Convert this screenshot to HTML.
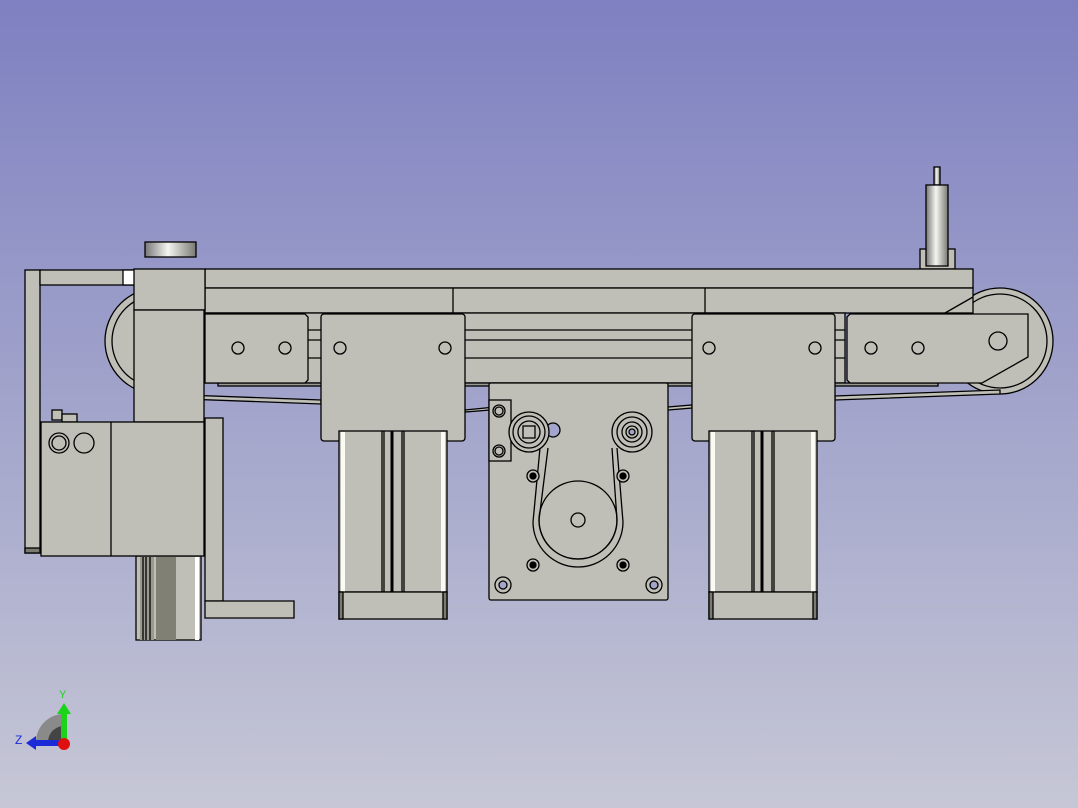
<!DOCTYPE html>
<html><head><style>
html,body{margin:0;padding:0;}
body{width:1078px;height:808px;overflow:hidden;background:linear-gradient(#7e80c1,#a2a4cb 50%,#c6c7d6);}
svg{display:block;}
</style></head><body>
<svg width="1078" height="808" viewBox="0 0 1078 808" xmlns="http://www.w3.org/2000/svg">
<defs>
<linearGradient id="cyl" x1="0" x2="1"><stop offset="0" stop-color="#777"/><stop offset=".45" stop-color="#f4f4f0"/><stop offset="1" stop-color="#7a7a74"/></linearGradient>
</defs>
<g stroke="#000" stroke-width="1.3" fill="#bfbfb7">
<circle cx="1000" cy="341" r="53"/><circle cx="1000" cy="341" r="47"/>
<circle cx="158" cy="341" r="53"/><circle cx="158" cy="341" r="46"/>
<path d="M158 394 L321 400 L321 404 L158 398Z"/>
<path d="M835 400 L1000 394 L1000 390 L835 396Z"/>
<path d="M465 410 L515 405 L515 408 L465 412Z"/>
<path d="M632 410 L692 405 L692 408 L632 413Z"/>
<rect x="934" y="167" width="6" height="18" fill="url(#cyl)"/>
<rect x="920" y="249" width="35" height="20"/>
<rect x="926" y="185" width="22" height="81" fill="url(#cyl)"/>
<rect x="205" y="269" width="768" height="19"/>
<rect x="205" y="288" width="768" height="25"/>
<line x1="453" y1="288" x2="453" y2="313"/><line x1="705" y1="288" x2="705" y2="313"/>
<path d="M945 313 L973 297"/>
<rect x="205" y="313" width="640" height="70"/>
<line x1="205" y1="330" x2="845" y2="330"/><line x1="205" y1="340" x2="845" y2="340"/><line x1="205" y1="358" x2="845" y2="358"/>
<rect x="218" y="383" width="720" height="3" fill="#9a9a94"/>
<path d="M205 314 H305 L308 317 V380 L305 383 H205Z"/>
<circle cx="238" cy="348" r="6"/><circle cx="285" cy="348" r="6"/>
<path d="M850 314 H1028 V357 L982 383 H850 L847 380 V317Z"/>
<circle cx="871" cy="348" r="6"/><circle cx="918" cy="348" r="6"/><circle cx="998" cy="341" r="9"/>
<rect x="489" y="383" width="179" height="217" rx="2"/>
<rect x="489" y="400" width="22" height="61"/>
<circle cx="499" cy="411" r="6"/><circle cx="499" cy="411" r="4"/>
<circle cx="499" cy="451" r="6"/><circle cx="499" cy="451" r="4"/>
<circle cx="553" cy="430" r="7" fill="#a3a5cc"/>
<circle cx="578" cy="520" r="39"/>
<path d="M548 448 L539 520 A39 39 0 0 0 617 520 L612 448" fill="none"/>
<path d="M540 448 L533 522 A45 45 0 0 0 623 522 L617 448" fill="none"/>
<circle cx="578" cy="520" r="7"/>
<circle cx="529" cy="432" r="20"/><circle cx="529" cy="432" r="16"/><circle cx="529" cy="432" r="11"/><rect x="523" y="426" width="12" height="12"/>
<circle cx="632" cy="432" r="20"/><circle cx="632" cy="432" r="15"/><circle cx="632" cy="432" r="10"/><circle cx="632" cy="432" r="6"/><circle cx="632" cy="432" r="3" fill="#a3a5cc"/>
<g><circle cx="533" cy="476" r="6"/><circle cx="533" cy="476" r="3" fill="#000"/>
<circle cx="623" cy="476" r="6"/><circle cx="623" cy="476" r="3" fill="#000"/>
<circle cx="533" cy="565" r="6"/><circle cx="533" cy="565" r="3" fill="#000"/>
<circle cx="623" cy="565" r="6"/><circle cx="623" cy="565" r="3" fill="#000"/></g>
<circle cx="503" cy="585" r="8"/><circle cx="503" cy="585" r="4" fill="#a3a5cc"/>
<circle cx="654" cy="585" r="8"/><circle cx="654" cy="585" r="4" fill="#a3a5cc"/>
<rect x="321" y="314" width="144" height="127" rx="3"/>
<circle cx="340" cy="348" r="6"/><circle cx="445" cy="348" r="6"/>
<rect x="692" y="314" width="143" height="127" rx="3"/>
<circle cx="709" cy="348" r="6"/><circle cx="815" cy="348" r="6"/>
<g id="c1">
<rect x="339" y="431" width="108" height="161"/>
<rect x="341" y="432" width="4" height="160" fill="#fbfbf5" stroke="none"/>
<rect x="441" y="432" width="4" height="160" fill="#fbfbf5" stroke="none"/>
<line x1="382" y1="431" x2="382" y2="592"/><line x1="384" y1="431" x2="384" y2="592"/>
<line x1="392" y1="431" x2="392" y2="592" stroke-width="3"/>
<line x1="402" y1="431" x2="402" y2="592"/><line x1="404" y1="431" x2="404" y2="592"/>
<rect x="339" y="592" width="108" height="27"/>
<rect x="339" y="592" width="4" height="27" fill="#7a7a6e"/><rect x="443" y="592" width="4" height="27" fill="#7a7a6e"/>
</g>
<use href="#c1" x="370"/>
<rect x="145" y="242" width="51" height="15" fill="url(#cyl)"/>
<rect x="25" y="270" width="15" height="283"/>
<rect x="25" y="548" width="15" height="5" fill="#7a7a6e"/>
<rect x="40" y="270" width="125" height="15"/>
<rect x="123" y="270" width="22" height="15" fill="#fff"/>
<rect x="134" y="269" width="71" height="41"/>
<rect x="134" y="310" width="70" height="112"/>
<rect x="52" y="410" width="10" height="10"/><rect x="62" y="414" width="15" height="8"/>
<rect x="205" y="418" width="18" height="183"/>
<path d="M205 601 H294 V618 H205Z"/>
<rect x="136" y="556" width="65" height="84"/>
<rect x="156" y="557" width="20" height="83" fill="#808074" stroke="none"/>
<rect x="140" y="557" width="14" height="83" fill="#9a9a8e" stroke="none"/>
<rect x="195" y="557" width="4" height="83" fill="#fff" stroke="none"/>
<line x1="143" y1="557" x2="143" y2="640"/><line x1="146" y1="557" x2="146" y2="640"/><line x1="150" y1="557" x2="150" y2="640"/>
<rect x="41" y="422" width="163" height="134"/>
<line x1="111" y1="422" x2="111" y2="556"/>
<circle cx="59" cy="443" r="10"/><circle cx="59" cy="443" r="7"/>
<circle cx="84" cy="443" r="10"/>
</g>
<path d="M36 742 A28 28 0 0 1 64 714 L64 742Z" fill="#8a8a8a"/>
<path d="M48 742 A16 16 0 0 1 64 726 L64 742Z" fill="#444"/>
<rect x="61" y="712" width="6" height="30" fill="#1bd31b"/>
<path d="M57 714 L64 703 L71 714Z" fill="#1bd31b"/>
<rect x="34" y="740" width="28" height="6" fill="#1a2ad8"/>
<path d="M36 736 L26 743 L36 750Z" fill="#1a2ad8"/>
<circle cx="64" cy="744" r="6" fill="#e01010"/>
<text x="59" y="698" font-family="Liberation Sans,sans-serif" font-size="11" fill="#1bd31b">Y</text>
<text x="15" y="744" font-family="Liberation Sans,sans-serif" font-size="12" fill="#1a2ad8">Z</text>
</svg>
</body></html>
